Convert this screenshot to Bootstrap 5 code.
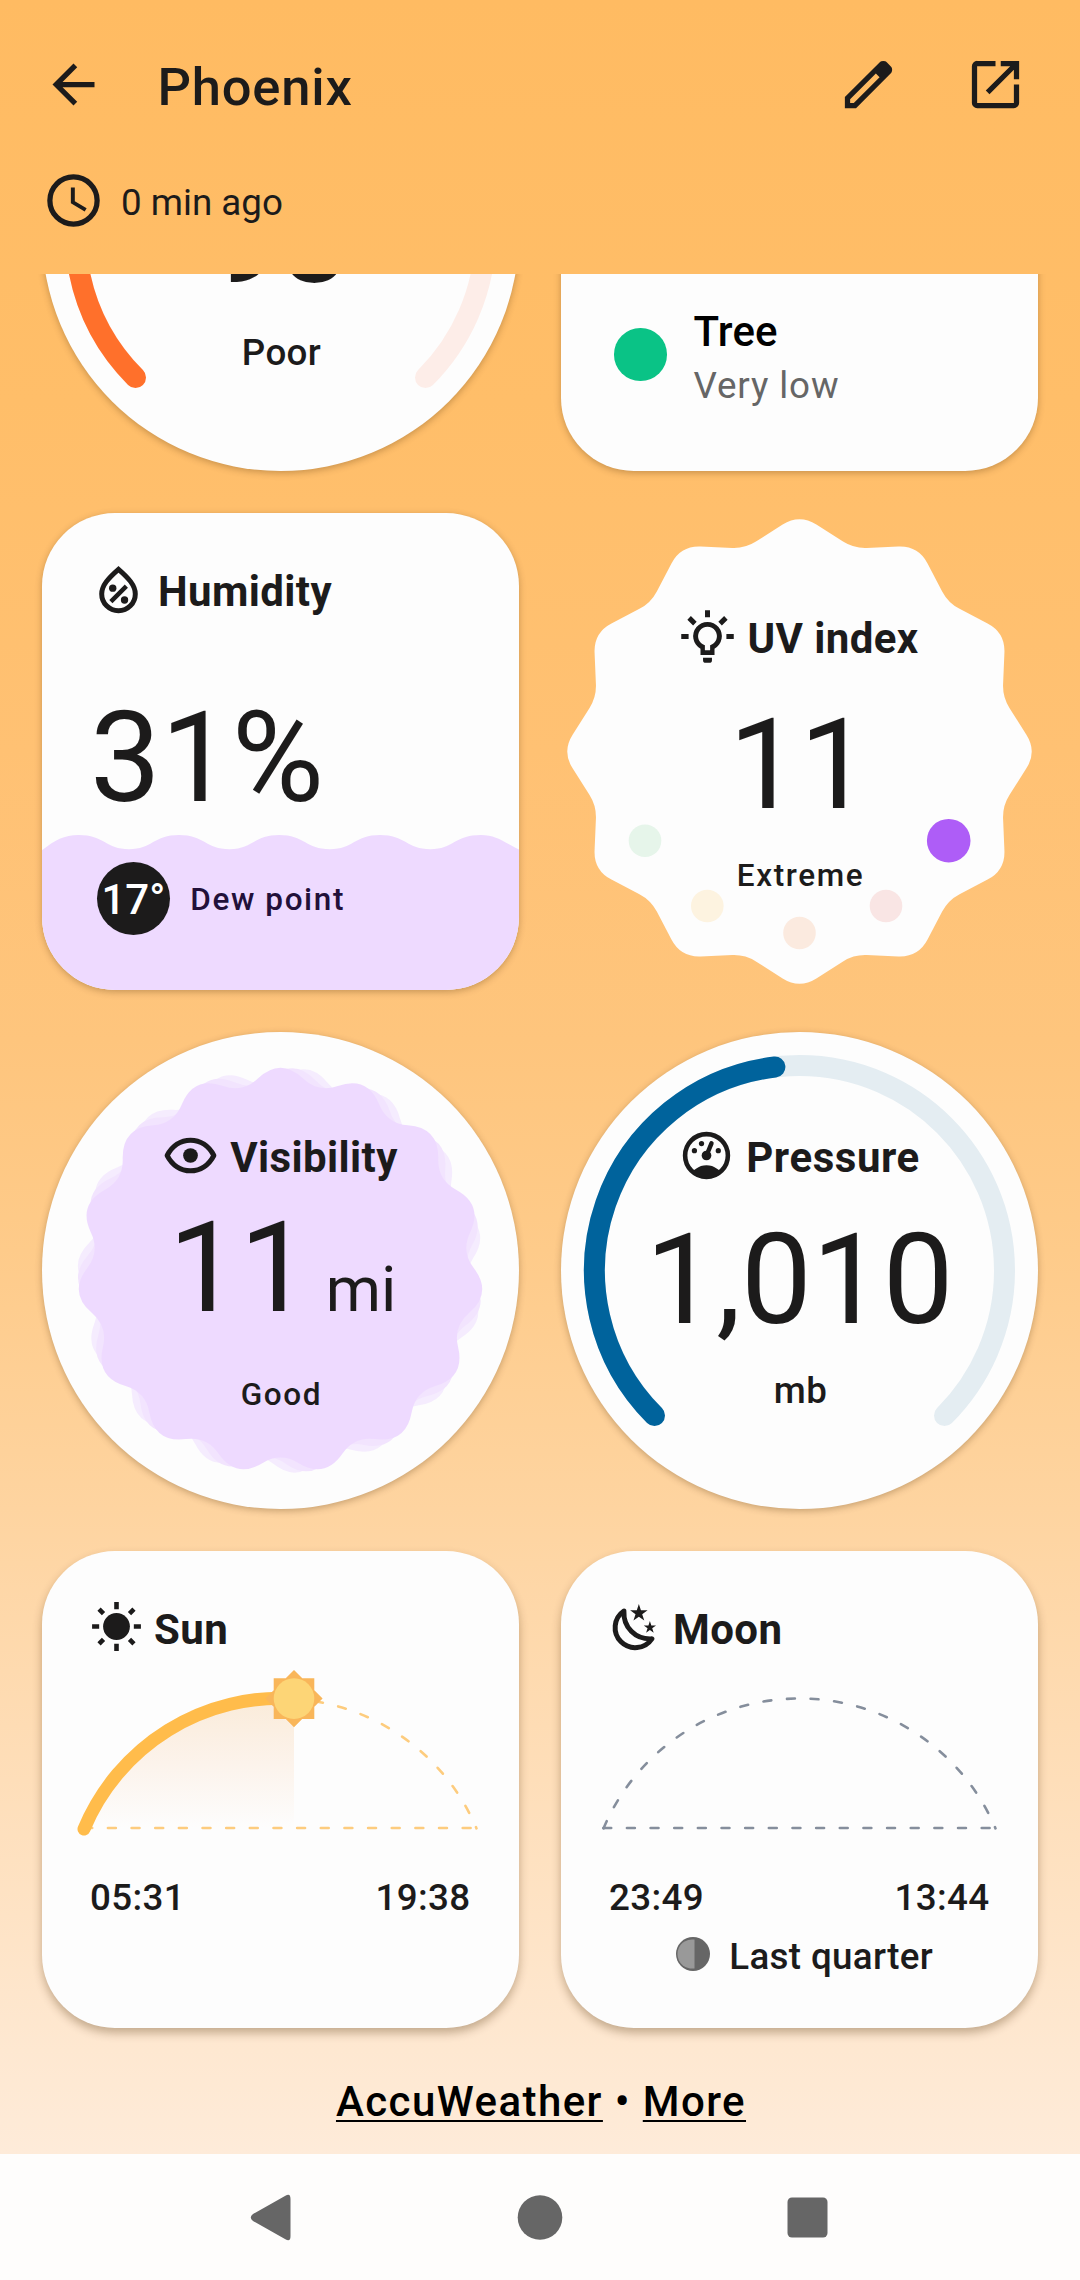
<!DOCTYPE html>
<html lang="en">
<head>
<meta charset="utf-8">
<meta name="viewport" content="width=device-width, initial-scale=1">
<title>Phoenix weather</title>
<link href="https://cdn.jsdelivr.net/npm/bootstrap@5.3.0/dist/css/bootstrap.min.css" rel="stylesheet">
<script src="https://cdn.jsdelivr.net/npm/bootstrap@5.3.0/dist/js/bootstrap.bundle.min.js"></script>
<style>
  body {
    font-family: Roboto, "Noto Sans", sans-serif;
    color: #1c1b1b;
    width: 1080px;
    height: 2280px;
    overflow: hidden;
    background: linear-gradient(180deg, #ffbb62 0, #ffbe69 400px, #ffc173 750px, #fec57d 1040px, #fecb8a 1250px, #fed4a0 1509px, #fedeb9 1780px, #fee8d1 2050px, #feebd9 2154px);
  }
  .ico { width: 63px; height: 63px; flex: none; display: block; }
  .page-head { height: 274px; padding: 52.5px 53px 0 42px; }
  .page-head .bar { height: 63px; }
  .city { font-size: 52.5px; line-height: 62px; font-weight: 500; letter-spacing: .8px; margin: 6px 0 0 52.5px; }
  .updated { margin-top: 53.5px; height: 63px; }
  .updated span { font-size: 36.75px; line-height: 48px; margin: 4px 0 0 16px; }
  .scroller { height: 1880px; }
  .tiles { display: grid; grid-template-columns: 477px 477px; gap: 42px; justify-content: center; margin-top: -280px; padding-bottom: 48.6px; }
  .tile { width: 477px; height: 477px; background: #fdfdfd; border-radius: 73px; box-shadow: 0 2px 7px rgba(70,40,0,.3); }
  .tile.low { box-shadow: 0 5px 10px rgba(70,40,0,.32); }
  .tile.round { border-radius: 50%; }
  .tile.bare { background: none; box-shadow: none; }
  .tile > * { position: relative; }
  .tile > .backdrop { position: absolute; inset: 0; width: 477px; height: 477px; }
  .ttl { height: 63px; gap: 8px; }
  .ttl span { font-weight: 700; font-size: 42px; line-height: 50px; letter-spacing: .4px; margin-top: 4px; }
  .low .ttl span { margin-top: 6px; }
  .centered { padding: 92px 4px 0 0; }
  .figure-xl { font-size: 126px; line-height: 148px; height: 148px; }
  .figure-xl small { font-size: 63px; line-height: 1; }
  .cap-md { font-size: 36.75px; line-height: 48px; font-weight: 500; letter-spacing: .35px; }
  .cap-sm { font-size: 31.5px; line-height: 42px; font-weight: 500; letter-spacing: 1.6px; }
  .text-center > .cap-sm, .text-center > .cap-md { padding-left: 2px; }
  .aqi-num { padding-top: 177px; font-size: 120px; line-height: 140px; }
  .pollen { padding: 312.6px 0 0 53.3px; gap: 26.5px; }
  .dot-lg { width: 52.6px; height: 52.6px; margin-top: 21.4px; background: #0ac386; }
  .pollen .nm { font-size: 42px; line-height: 50px; font-weight: 500; color: #000; letter-spacing: .2px; }
  .pollen .lv { font-size: 36.75px; line-height: 48px; color: #666; letter-spacing: .9px; margin-top: 5.4px; }
  .dew { margin: 29.5px 0 0 54.8px; gap: 20.5px; height: 73px; color: #22103a; }
  .dew-badge { width: 73px; height: 73px; background: #1c1b1b; color: #fff; font-size: 42px; line-height: 50px; font-weight: 500; padding-top: 4px; }
  .path-art { width: 477px; height: 214px; display: block; }
  .credits { font-size: 42px; line-height: 50px; font-weight: 500; letter-spacing: 1.43px; color: #000; white-space: pre; padding-left: 2px; }
  .credits a { color: #000; text-decoration: underline 2px; text-underline-offset: 3.5px; text-decoration-skip-ink: none; }
  .sysbar { height: 126px; background: #fefdfc; padding: 0 231px; }
  .sysbar svg { width: 81px; height: 81px; display: block; }
</style>
</head>
<body>
<svg width="0" height="0" class="position-absolute" aria-hidden="true">
  <symbol id="star5" viewBox="-4 -4 8 8" overflow="visible"><path d="M0-3.5.79-1.08H3.33L1.27.41 2.06 2.83 0 1.34-2.06 2.83-1.27.41-3.33-1.08H-.79Z"/></symbol>
</svg>

<header class="page-head">
  <div class="bar d-flex align-items-center">
    <svg class="ico" viewBox="0 0 24 24" fill="currentColor"><path d="M20 11H7.83l5.59-5.59L12 4l-8 8 8 8 1.41-1.41L7.83 13H20z"/></svg>
    <h1 class="city">Phoenix</h1>
    <svg class="ico ms-auto" viewBox="0 0 24 24" fill="currentColor"><path fill-rule="evenodd" d="M3 21v-4.25L16.2 3.575q.3-.275.663-.425t.762-.15.775.15.65.45L20.425 5q.3.275.438.65T21 6.4q0 .4-.137.763t-.438.662L7.25 21zM5 19h1.4l9.825-9.8L14.8 7.775 5 17.6z"/></svg>
    <svg class="ico" style="margin-left:64px" viewBox="0 0 24 24" fill="currentColor"><path d="M5 21q-.825 0-1.413-.588T3 19V5q0-.825.588-1.413T5 3h7v2H5v14h14v-7h2v7q0 .825-.588 1.413T19 21zM9.7 15.7 8.3 14.3 17.6 5H14V3h7v7h-2V6.4z"/></svg>
  </div>
  <div class="updated d-flex align-items-center">
    <svg class="ico" viewBox="0 0 24 24"><circle cx="12" cy="12" r="9" fill="none" stroke="currentColor" stroke-width="2"/><path fill="currentColor" d="M12.5 7H11v6l5.25 3.15.75-1.23-4.5-2.67z"/></svg>
    <span>0 min ago</span>
  </div>
</header>

<main class="scroller overflow-hidden">
  <div class="tiles">

    <section class="tile round position-relative text-center">
      <svg class="backdrop" viewBox="0 0 477 477" fill="none" stroke-width="21" stroke-linecap="round">
        <path d="M93.5 383.5A205 205 0 1 1 383.5 383.5" stroke="#fdede8"/>
        <path d="M93.5 383.5A205 205 0 0 1 238.5 33.5" stroke="#ff702b"/>
      </svg>
      <div class="aqi-num">98</div>
      <div class="cap-md" style="margin-top:18.4px">Poor</div>
    </section>

    <section class="tile">
      <div class="pollen d-flex align-items-start">
        <div class="dot-lg rounded-circle"></div>
        <div><div class="nm">Tree</div><div class="lv">Very low</div></div>
      </div>
    </section>

    <section class="tile position-relative overflow-hidden">
      <svg class="backdrop" viewBox="0 0 477 477"><path fill="#eedaff" d="M0 337.3C13 327 22 322 36.7 322C62 322 64 336.2 87 336.2C110 336.2 112 322 137 322C162 322 164 336.2 187.5 336.2C210 336.2 212 322 237.3 322C262 322 264 336.2 288 336.2C311 336.2 313 322 338 322C363 322 365 336.2 388.5 336.2C411 336.2 413 322 438.7 322C454 322 460 328 477 336.6V477H0Z"/></svg>
      <div class="ttl d-flex align-items-center" style="margin:45px 0 0 45px">
        <svg class="ico" viewBox="0 0 24 24"><path d="M12 4.3C8.2 7.6 5.6 10.4 5.6 13.7A6.4 6.4 0 0 0 18.4 13.7C18.4 10.4 15.8 7.6 12 4.3Z" fill="none" stroke="currentColor" stroke-width="1.9"/><circle cx="9.8" cy="11.5" r="1.4" fill="currentColor"/><circle cx="14.3" cy="16" r="1.4" fill="currentColor"/><path d="M9.1 16.6 15 10.7" stroke="currentColor" stroke-width="1.7"/></svg>
        <span>Humidity</span>
      </div>
      <div class="figure-xl" style="margin:63px 0 0 48px">31%</div>
      <div class="dew d-flex align-items-center">
        <div class="dew-badge rounded-circle d-flex align-items-center justify-content-center">17°</div>
        <div class="cap-sm" style="margin-top:4px">Dew point</div>
      </div>
    </section>

    <section class="tile bare position-relative text-center">
      <svg class="backdrop" viewBox="0 0 477 477">
        <path data-points="12" data-outer="237.6" data-inner="210.2" data-tip=".31" data-dip=".2" fill="#fdfdfd"/>
        <circle cx="84" cy="327.7" r="16.3" fill="#e6f5ea"/>
        <circle cx="146.3" cy="393" r="16.3" fill="#fdf3e0"/>
        <circle cx="238.5" cy="420" r="16.3" fill="#fbeadf"/>
        <circle cx="325" cy="393" r="16.3" fill="#f9e5e4"/>
        <circle cx="387.7" cy="327.7" r="21.8" fill="#ae5df7"/>
      </svg>
      <div class="centered"><div class="ttl d-flex align-items-center justify-content-center">
        <svg class="ico" viewBox="0 0 24 24" fill="currentColor"><path fill-rule="evenodd" d="M9.33 19V16.66A5.46 5.46 0 1 1 14.67 16.66V19ZM11 17.2V15.36A3.6 3.6 0 1 1 13 15.36V17.2Z"/><path d="M10.3 20.1H13.7V21Q13.7 22 12.7 22H11.3Q10.3 22 10.3 21ZM11.05 2H12.95V4.7H11.05ZM2 11.05H4.8V12.95H2ZM19.2 11.05H22V12.95H19.2Z"/><path d="M5 4.9 7.2 7.1M19 4.9 16.8 7.1" stroke="currentColor" stroke-width="1.9"/></svg>
        <span>UV index</span>
      </div></div>
      <div class="figure-xl" style="margin-top:23px">11</div>
      <div class="cap-sm" style="margin-top:15.6px">Extreme</div>
    </section>

    <section class="tile round position-relative text-center">
      <svg class="backdrop" viewBox="0 0 477 477">
        <path data-points="15" data-outer="213.5" data-inner="181.5" data-tip=".6" data-dip=".4" data-turn="7.5" fill="#f5ecfe"/>
        <path data-points="15" data-outer="213.5" data-inner="181.5" data-tip=".6" data-dip=".4" data-turn="3.75" fill="#f2e4fe"/>
        <path data-points="15" data-outer="213.5" data-inner="181.5" data-tip=".6" data-dip=".4" fill="#eedaff"/>
      </svg>
      <div class="centered"><div class="ttl d-flex align-items-center justify-content-center">
        <svg class="ico" viewBox="0 0 24 24"><path d="M3.1 12C5 8.3 8.3 6.15 12 6.15S19 8.3 20.9 12C19 15.7 15.7 17.85 12 17.85S5 15.7 3.1 12Z" fill="none" stroke="currentColor" stroke-width="1.9" stroke-linejoin="round"/><circle cx="12" cy="12" r="2.8" fill="currentColor"/></svg>
        <span>Visibility</span>
      </div></div>
      <div class="figure-xl ps-1" style="margin-top:7px">11<small>&nbsp;mi</small></div>
      <div class="cap-sm" style="margin-top:31.6px">Good</div>
    </section>

    <section class="tile round position-relative text-center">
      <svg class="backdrop" viewBox="0 0 477 477" fill="none" stroke-width="21" stroke-linecap="round">
        <path d="M93.5 383.5A205 205 0 1 1 383.5 383.5" stroke="#e4edf2"/>
        <path d="M93.5 383.5A205 205 0 0 1 213.9 35" stroke="#00639c"/>
      </svg>
      <div class="centered"><div class="ttl d-flex align-items-center justify-content-center">
        <svg class="ico" viewBox="0 0 24 24" fill="currentColor"><circle cx="12" cy="12" r="8.15" fill="none" stroke="currentColor" stroke-width="1.75"/><path d="M5.6 17.3Q6.8 18 8 17Q9.8 15.7 12 15.7T16 17Q17.2 18 18.4 17.3L17 19.2Q15 20.6 12 20.6T7 19.2Z"/><circle cx="7.4" cy="10.15" r="1"/><circle cx="10.1" cy="7.45" r="1"/><circle cx="16.5" cy="10.15" r="1"/><circle cx="12" cy="12" r="1.85"/><path d="M12 12 13.9 7.4" stroke="currentColor" stroke-width="1.7" stroke-linecap="round"/></svg>
        <span style="letter-spacing:.55px">Pressure</span>
      </div></div>
      <div class="figure-xl" style="margin-top:19px">1,010</div>
      <div class="cap-md" style="margin-top:13.2px">mb</div>
    </section>

    <section class="tile low position-relative overflow-hidden">
      <div class="ttl d-flex align-items-center" style="margin:44px 0 0 43px;gap:6px">
        <svg class="ico" viewBox="0 0 24 24" fill="currentColor"><circle cx="12" cy="12" r="5.1"/><path d="M12 2.7V5.4M12 18.6V21.3M2.7 12H5.4M18.6 12H21.3M5.35 5.35 7.05 7.05M18.65 5.35 16.95 7.05M5.35 18.65 7.05 16.95M18.65 18.65 16.95 16.95" stroke="currentColor" stroke-width="1.75"/></svg>
        <span>Sun</span>
      </div>
      <svg class="path-art" viewBox="0 107 477 214" fill="none">
        <defs><linearGradient id="day" x1="0" y1="147" x2="0" y2="277" gradientUnits="userSpaceOnUse"><stop offset="0" stop-color="#faebd9"/><stop offset=".5" stop-color="#fcf3eb"/><stop offset="1" stop-color="#fdfdfd"/></linearGradient></defs>
        <path d="M42.5 277A212.8 212.8 0 0 1 252 147.7V277Z" fill="url(#day)"/>
        <g stroke="#fdcc7e" stroke-width="2.6" stroke-linecap="round" stroke-dasharray="7.9 15.75"><path d="M42.5 277.4A212.8 212.8 0 0 1 434.5 277.4"/><path d="M42.3 277H434.5"/></g>
        <path d="M42 278A212.8 212.8 0 0 1 252 147.7" stroke="#ffbc4b" stroke-width="13" stroke-linecap="round"/>
        <g transform="translate(252 147.6)"><path d="M-20.3-20.3H20.3V20.3H-20.3ZM0-28.6 28.6 0 0 28.6-28.6 0Z" fill="#f9b65a"/><circle r="20.3" fill="#fdd576"/></g>
      </svg>
      <div class="cap-md d-flex justify-content-between" style="margin:2px 48.5px 0 48px"><span>05:31</span><span>19:38</span></div>
    </section>

    <section class="tile low position-relative overflow-hidden">
      <div class="ttl d-flex align-items-center" style="margin:44px 0 0 44px;gap:5px">
        <svg class="ico" viewBox="0 0 24 24" fill="currentColor"><path d="M7.2 6.1A7.65 7.65 0 1 0 17.85 16.7C11.5 17 6.9 12.2 7.2 6.1Z" fill="none" stroke="currentColor" stroke-width="1.9" stroke-linejoin="round"/><use href="#star5" x="8.9" y="2.9" width="8" height="8"/><use href="#star5" x="14.3" y="9.6" width="5.6" height="5.6"/></svg>
        <span>Moon</span>
      </div>
      <svg class="path-art" viewBox="0 107 477 214" fill="none" stroke="#858e9c" stroke-width="2.6" stroke-linecap="round" stroke-dasharray="7.9 15.75"><path d="M42.5 277.4A212.8 212.8 0 0 1 434.5 277.4"/><path d="M42.3 277H434.5"/></svg>
      <div class="cap-md d-flex justify-content-between" style="margin:2px 48.5px 0 48px"><span>23:49</span><span>13:44</span></div>
      <div class="cap-md d-flex" style="margin:11px 0 0 114.7px;gap:19.5px">
        <svg width="34" height="34" viewBox="0 0 34 34" style="margin-top:4px"><circle cx="17" cy="17" r="17" fill="#666"/><path d="M18.5 2.6A14.6 14.6 0 1 0 18.5 31.4Z" fill="#999"/></svg>
        <span>Last quarter</span>
      </div>
    </section>

  </div>
  <div class="credits d-flex justify-content-center"><div><a href="#">AccuWeather</a> • <a href="#">More</a></div></div>
</main>

<nav class="sysbar d-flex align-items-center justify-content-between" aria-label="System navigation">
  <svg viewBox="0 0 81 81" fill="#666"><path d="M54.4 18.8Q59.5 15.5 59.5 22V59Q59.5 65.5 54.4 62.2L22 44Q17.5 40.5 22 37Z"/></svg>
  <svg viewBox="0 0 81 81" fill="#666"><circle cx="40" cy="40.5" r="22.3"/></svg>
  <svg viewBox="0 0 81 81" fill="#666"><rect x="19.5" y="20.5" width="40" height="40" rx="4.5"/></svg>
</nav>

<script>
// Builds each rounded star outline from its data attributes (centre 238.5, 238.5).
document.querySelectorAll('path[data-points]').forEach(p => {
  const n = +p.dataset.points, tip = +p.dataset.tip, dip = +p.dataset.dip, turn = +(p.dataset.turn || 0);
  const v = [];
  for (let i = 0; i < 2 * n; i++) {
    const a = (i * 180 / n + turn) * Math.PI / 180, r = i % 2 ? +p.dataset.inner : +p.dataset.outer;
    v.push([238.5 + r * Math.sin(a), 238.5 - r * Math.cos(a)]);
  }
  const mix = (a, b, t) => (a[0] + (b[0] - a[0]) * t).toFixed(2) + ' ' + (a[1] + (b[1] - a[1]) * t).toFixed(2);
  let d = '';
  v.forEach((c, i) => {
    const prev = v[(i + 2 * n - 1) % (2 * n)], next = v[(i + 1) % (2 * n)], t = i % 2 ? dip : tip;
    d += (i ? 'L' : 'M') + mix(c, prev, t) + 'Q' + mix(c, c, 0) + ' ' + mix(c, next, t);
  });
  p.setAttribute('d', d + 'Z');
});
</script>
</body>
</html>
